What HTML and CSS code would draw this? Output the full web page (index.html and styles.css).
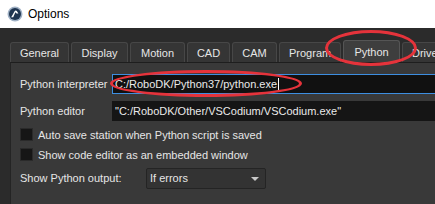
FILE: index.html
```html
<!DOCTYPE html>
<html>
<head>
<meta charset="utf-8">
<link rel="stylesheet" href="styles.css">
</head>
<body>
<div class="window">
  <div class="titlebar">
    <svg class="app-icon" width="16" height="16" viewBox="0 0 16 16">
      <circle cx="8" cy="8" r="7.5" fill="#9fb0c4"/>
      <circle cx="8" cy="8" r="6" fill="#1f3550"/>
      <path d="M4.2 11.2 L7.6 5.2 Q8.6 3.8 9.8 5 L11.4 7.4 L9.6 7.6 L8.4 6.2 L6.2 11.2 Z" fill="#ffffff"/>
    </svg>
    <span class="title">Options</span>
  </div>
  <div class="client">
    <div class="tabs">
      <div class="tab t-general">General</div>
      <div class="tab t-display">Display</div>
      <div class="tab t-motion">Motion</div>
      <div class="tab t-cad">CAD</div>
      <div class="tab t-cam">CAM</div>
      <div class="tab t-program">Program</div>
      <div class="tab t-python active">Python</div>
      <div class="tab t-driver">Driver</div>
    </div>
    <div class="panel">
      <div class="row field-row first">
        <span class="label">Python interpreter</span>
        <div class="field focused">C:/RoboDK/Python37/python.exe<span class="caret"></span></div>
      </div>
      <div class="row field-row">
        <span class="label">Python editor</span>
        <div class="field">"C:/RoboDK/Other/VSCodium/VSCodium.exe"</div>
      </div>
      <div class="row check-row">
        <span class="checkbox"></span>
        <span class="check-label">Auto save station when Python script is saved</span>
      </div>
      <div class="row check-row">
        <span class="checkbox"></span>
        <span class="check-label">Show code editor as an embedded window</span>
      </div>
      <div class="row combo-row">
        <span class="label combo-label">Show Python output:</span>
        <div class="combo">If errors<span class="arrow"></span></div>
      </div>
    </div>
    <div class="mark mark-tab"></div>
    <div class="mark mark-field"></div>
  </div>
</div>
</body>
</html>
```
FILE: styles.css
```css
* { box-sizing: border-box; }
html, body { margin: 0; padding: 0; }
body {
  width: 435px;
  height: 204px;
  overflow: hidden;
  font-family: "Liberation Sans", Arial, sans-serif;
  font-size: 11px;
  background: #2b2b2b;
}
.window { position: relative; width: 435px; height: 204px; overflow: hidden; }
.titlebar {
  height: 28px;
  background: #ffffff;
  display: flex;
  align-items: center;
  padding-left: 7px;
  gap: 5px;
}
.app-icon { display: block; }
.title { color: #000; font-size: 12px; }
.client {
  position: relative;
  height: 176px;
  background: #2b2b2b;
  padding: 12px 0 0 10px;
}
.tabs {
  display: flex;
  align-items: flex-end;
  gap: 2px;
  height: 22px;
  white-space: nowrap;
}
.tab {
  height: 20px;
  background: #353535;
  border: 1px solid #474747;
  border-bottom: none;
  border-radius: 3px 3px 0 0;
  color: #e6e6e6;
  display: flex;
  align-items: center;
  justify-content: center;
  flex: none;
  padding-top: 1px;
}
.tab.active {
  height: 22px;
  background: #3e3e3e;
  border-color: #555;
}
.t-general { width: 59px; }
.t-display { width: 57px; }
.t-motion { width: 55px; }
.t-cad { width: 43px; }
.t-cam { width: 45px; }
.t-program { width: 62px; justify-content: flex-start; padding-left: 9px; }
.t-python { width: 57px; }
.t-driver { width: 55px; justify-content: flex-start; padding-left: 9px; }
.panel {
  height: 160px;
  background: #393939;
  border-top: 1px solid #1e1e1e;
  border-left: 1px solid #242424;
  padding: 11px 0 0 9px;
  color: #e6e6e6;
}
.row { display: flex; align-items: center; white-space: nowrap; }
.field-row { height: 20px; margin-bottom: 7px; }
.label { width: 92px; flex: none; }
.field {
  height: 20px;
  flex: none;
  width: 340px;
  background: #151515;
  border: 1px solid #151515;
  padding-left: 2px;
  display: flex;
  align-items: center;
  color: #eaeaea;
}
.field.focused { border-color: #3d8ee0; background: #111; }
.caret { display: inline-block; width: 1px; height: 13px; background: #fff; margin-left: 1px; }
.check-row { height: 13px; margin-bottom: 7px; }
.checkbox {
  width: 13px;
  height: 13px;
  background: #161616;
  border: 1px solid #2a2a2a;
  flex: none;
  margin-right: 5px;
}
.combo-row { height: 20px; }
.combo-label { width: 126px; }
.combo {
  width: 120px;
  height: 21px;
  background: #333333;
  border: 1px solid #242424;
  border-radius: 2px;
  padding-left: 3px;
  display: flex;
  align-items: center;
  position: relative;
}
.arrow {
  position: absolute;
  right: 6px;
  top: 8px;
  width: 0;
  height: 0;
  border-left: 4px solid transparent;
  border-right: 4px solid transparent;
  border-top: 4px solid #c8c8c8;
}
.mark {
  position: absolute;
  border: 3px solid #e5333b;
  border-radius: 50%;
}
.mark-tab { left: 325px; top: 2px; width: 92px; height: 36px; }
.mark-field { left: 110px; top: 42px; width: 192px; height: 27px; }
```
